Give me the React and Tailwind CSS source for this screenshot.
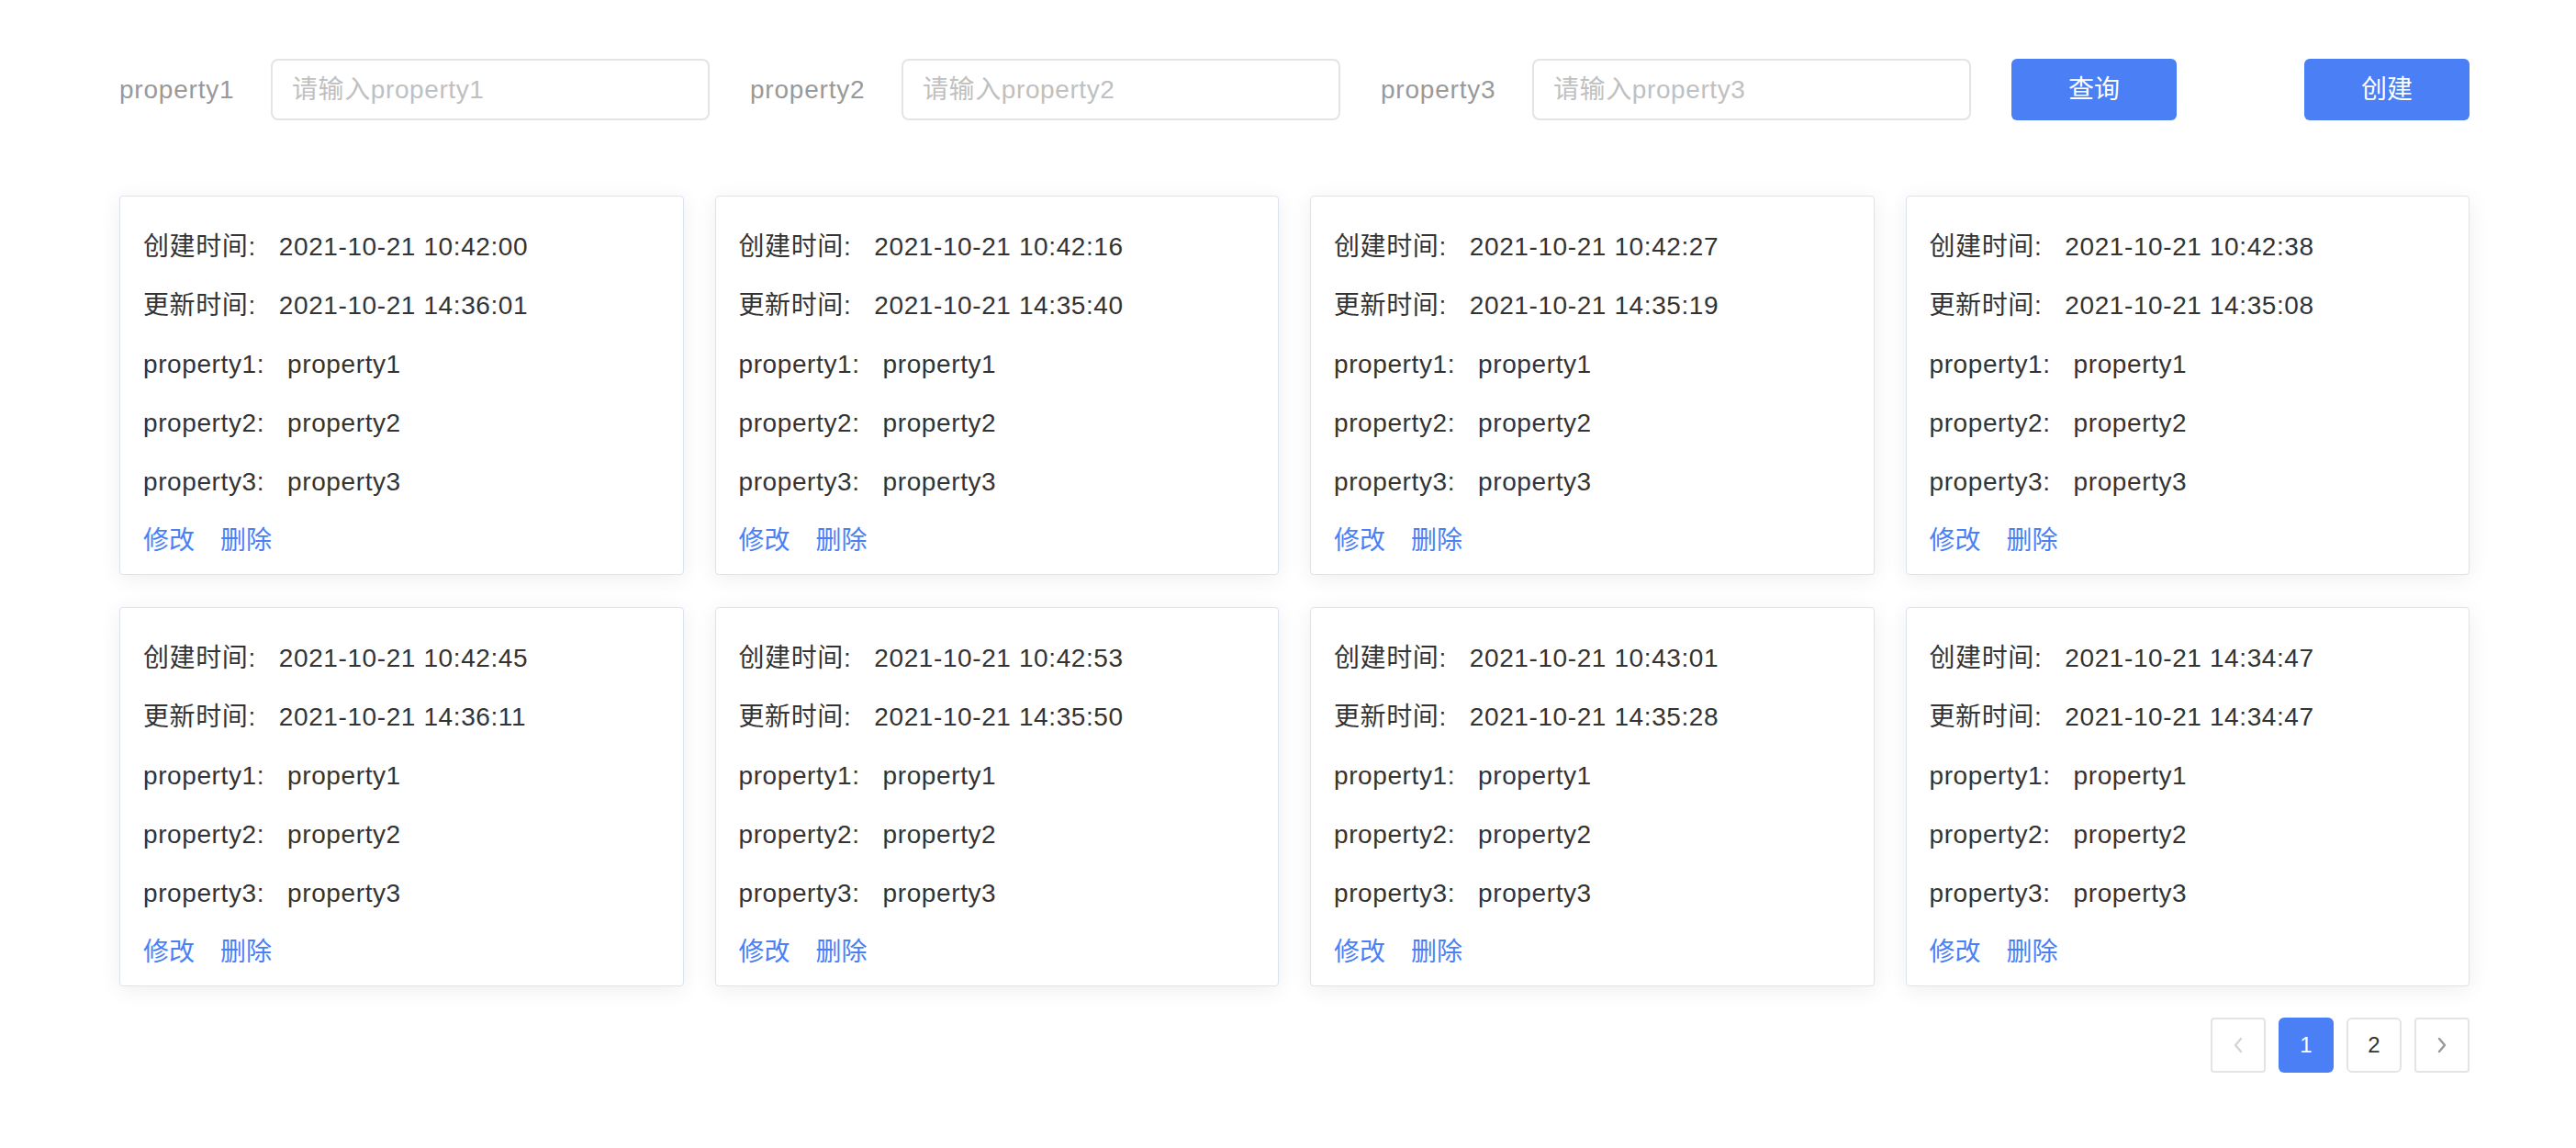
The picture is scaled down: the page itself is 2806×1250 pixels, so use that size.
import React, { useState } from 'react';

const cards = [
  { created: '2021-10-21 10:42:00', updated: '2021-10-21 14:36:01' },
  { created: '2021-10-21 10:42:16', updated: '2021-10-21 14:35:40' },
  { created: '2021-10-21 10:42:27', updated: '2021-10-21 14:35:19' },
  { created: '2021-10-21 10:42:38', updated: '2021-10-21 14:35:08' },
  { created: '2021-10-21 10:42:45', updated: '2021-10-21 14:36:11' },
  { created: '2021-10-21 10:42:53', updated: '2021-10-21 14:35:50' },
  { created: '2021-10-21 10:43:01', updated: '2021-10-21 14:35:28' },
  { created: '2021-10-21 14:34:47', updated: '2021-10-21 14:34:47' },
];

const font = { fontFamily: '"Liberation Sans", "Noto Sans CJK SC", sans-serif' };

// Ligne label / valeur dans une carte
const Row = ({ label, value }) => (
  <div className="flex h-[40px] items-center text-[28px] text-[#333] tracking-[0.6px]">
    <span className="mr-[25px]">{label}:</span>
    <span>{value}</span>
  </div>
);

const SearchField = ({ name, value, onChange }) => (
  <div className="flex items-center mr-[44px]">
    <label className="w-[124px] mr-[41px] text-[28px] text-[#999] tracking-[0.8px]">{name}</label>
    <input
      value={value}
      onChange={onChange}
      placeholder={`请输入${name}`}
      className="w-[478px] h-[67px] border-2 border-[#e4e4e4] rounded-[8px] px-[21px] text-[28px] tracking-[0.6px] text-[#333] placeholder:text-[#c0c0c0] outline-none"
    />
  </div>
);

const Chevron = ({ dir, color }) => (
  <svg width="14" height="20" viewBox="0 0 14 20" fill="none">
    <path
      d={dir === 'left' ? 'M10 3 L4 10 L10 17' : 'M4 3 L10 10 L4 17'}
      stroke={color}
      strokeWidth="2.4"
      strokeLinecap="round"
      strokeLinejoin="round"
    />
  </svg>
);

export default function App() {
  const [form, setForm] = useState({ property1: '', property2: '', property3: '' });
  const [page, setPage] = useState(1);

  const handleChange = (e, name) => setForm(f => ({ ...f, [name]: e.target.value }));

  return (
    <div className="min-h-screen bg-white" style={font}>
      <div className="w-[2690px] pl-[130px] pt-[64px]">
        {/* barre de recherche */}
        <div className="flex items-center">
          {['property1', 'property2', 'property3'].map(n => (
            <SearchField key={n} name={n} value={form[n]} onChange={e => handleChange(e, n)} />
          ))}
          <button className="w-[180px] h-[67px] rounded-[6px] bg-[#4a7ff6] text-white text-[28px]">查询</button>
          <button className="ml-auto w-[180px] h-[67px] rounded-[6px] bg-[#4a7ff6] text-white text-[28px]">创建</button>
        </div>

        {/* cartes */}
        <div className="mt-[82px] grid grid-cols-4 gap-x-[34px] gap-y-[35px]">
          {cards.map((c, i) => (
            <div
              key={i}
              className="bg-white border border-[#dce2ee] rounded-[4px] shadow-[0_4px_24px_rgba(0,0,0,0.07)] pl-[25px] pt-[35px] pb-[16px] flex flex-col gap-[24px]"
            >
              <Row label="创建时间" value={c.created} />
              <Row label="更新时间" value={c.updated} />
              <Row label="property1" value="property1" />
              <Row label="property2" value="property2" />
              <Row label="property3" value="property3" />
              <div className="flex h-[40px] items-center gap-[28px] text-[28px] text-[#4a7ff6]">
                <span className="cursor-pointer">修改</span>
                <span className="cursor-pointer">删除</span>
              </div>
            </div>
          ))}
        </div>

        {/* pagination */}
        <div className="mt-[34px] flex justify-end gap-[14px]">
          <button className="w-[60px] h-[60px] border-2 border-[#e4e4e4] rounded-[4px] flex items-center justify-center">
            <Chevron dir="left" color="#d5d5d5" />
          </button>
          {[1, 2].map(p => (
            <button
              key={p}
              onClick={() => setPage(p)}
              className={
                p === page
                  ? 'w-[60px] h-[60px] rounded-[6px] bg-[#4a7ff6] text-white text-[24px]'
                  : 'w-[60px] h-[60px] rounded-[6px] border-2 border-[#e4e4e4] text-[#333] text-[24px]'
              }
            >
              {p}
            </button>
          ))}
          <button className="w-[60px] h-[60px] border-2 border-[#e4e4e4] rounded-[4px] flex items-center justify-center">
            <Chevron dir="right" color="#999" />
          </button>
        </div>
      </div>
    </div>
  );
}
